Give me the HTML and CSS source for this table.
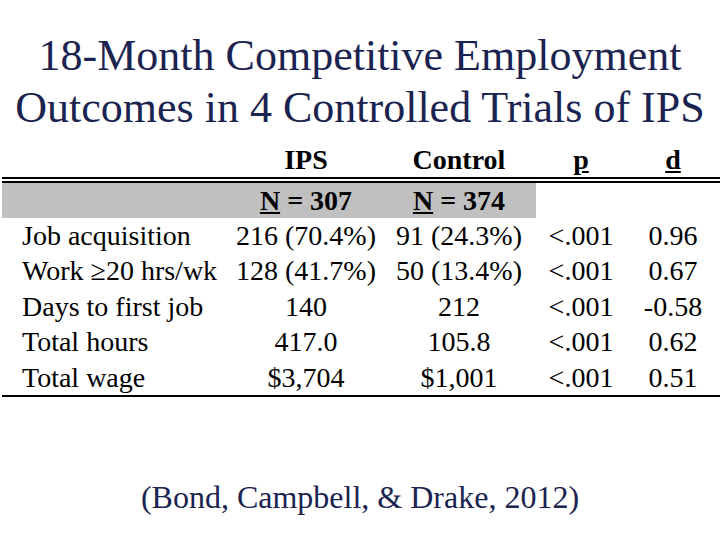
FILE: index.html
```html
<!DOCTYPE html>
<html>
<head>
<meta charset="utf-8">
<link rel="stylesheet" href="styles.css">
</head>
<body>
<div class="slide">
  <h1 class="title">18-Month Competitive Employment<br>Outcomes in 4 Controlled Trials of IPS</h1>
  <table class="results">
    <colgroup>
      <col class="c-label"><col class="c-ips"><col class="c-ctrl"><col class="c-p"><col class="c-d">
    </colgroup>
    <thead>
      <tr class="head">
        <th></th><th>IPS</th><th>Control</th><th><u>p</u></th><th><u>d</u></th>
      </tr>
      <tr class="nrow">
        <th class="gray"></th><th class="gray"><u>N</u> = 307</th><th class="gray"><u>N</u> = 374</th><th></th><th></th>
      </tr>
    </thead>
    <tbody>
      <tr><td class="label">Job acquisition</td><td>216 (70.4%)</td><td>91 (24.3%)</td><td>&lt;.001</td><td>0.96</td></tr>
      <tr><td class="label">Work ≥20 hrs/wk</td><td>128 (41.7%)</td><td>50 (13.4%)</td><td>&lt;.001</td><td>0.67</td></tr>
      <tr><td class="label">Days to first job</td><td>140</td><td>212</td><td>&lt;.001</td><td>-0.58</td></tr>
      <tr><td class="label">Total hours</td><td>417.0</td><td>105.8</td><td>&lt;.001</td><td>0.62</td></tr>
      <tr class="last"><td class="label">Total wage</td><td>$3,704</td><td>$1,001</td><td>&lt;.001</td><td>0.51</td></tr>
    </tbody>
  </table>
  <p class="cite">(Bond, Campbell, &amp; Drake, 2012)</p>
</div>
</body>
</html>
```
FILE: styles.css
```css
html, body {
  margin: 0;
  padding: 0;
  background: #ffffff;
}
.slide {
  width: 720px;
  height: 540px;
  overflow: hidden;
  font-family: "Liberation Serif", "Times New Roman", serif;
  display: flex;
  flex-direction: column;
}
.title {
  margin: 30px 0 0 0;
  font-weight: normal;
  font-size: 44px;
  line-height: 52px;
  text-align: center;
  color: #1b2350;
}
.results {
  margin: 8px 0 0 2px;
  width: 718px;
  table-layout: fixed;
  border-collapse: separate;
  border-spacing: 0;
  color: #000;
  font-size: 28px;
}
.c-label { width: 228px; }
.c-ips { width: 152px; }
.c-ctrl { width: 154px; }
.c-p { width: 90px; }
.c-d { width: 94px; }
.results th, .results td {
  padding: 0;
  text-align: center;
  white-space: nowrap;
  line-height: 35px;
  height: 35px;
}
.results th {
  font-weight: bold;
}
.head th {
  border-bottom: 6px double #000;
}
.nrow th.gray {
  background: #c0c0c0;
}
.results td {
  line-height: 35.4px;
  height: 35.4px;
}
.results td.label {
  text-align: left;
  padding-left: 20px;
}
.last td {
  border-bottom: 2px solid #000;
}
.cite {
  margin: 82px 0 0 0;
  font-size: 32px;
  line-height: 37px;
  text-align: center;
  color: #1b2350;
}
```
